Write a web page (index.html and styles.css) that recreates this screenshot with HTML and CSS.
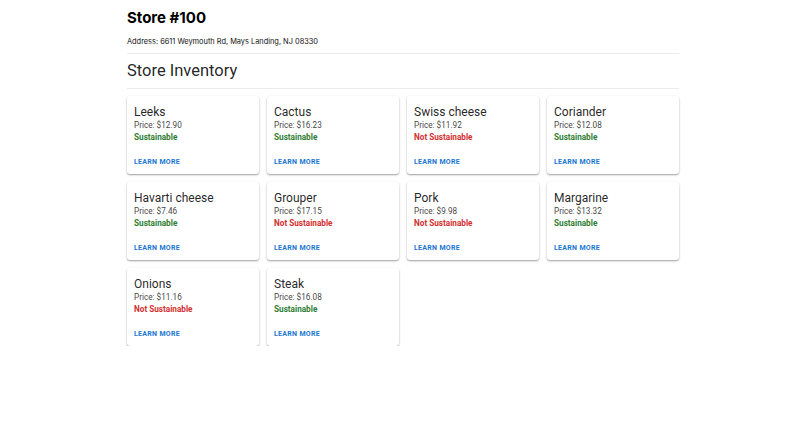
FILE: index.html
```html
<!DOCTYPE html>
<html>
<head>
<meta charset="utf-8">
<link rel="stylesheet" href="styles.css">
</head>
<body>
<div class="page">
  <h1 class="store-title">Store #100</h1>
  <p class="address">Address: 6611 Weymouth Rd, Mays Landing, NJ 08330</p>
  <hr class="divider">
  <h2 class="section-title">Store Inventory</h2>
  <hr class="divider divider-2">
  <div class="grid">
    <div class="card"><div class="name">Leeks</div><div class="price">Price: $12.90</div><div class="status ok">Sustainable</div><div class="learn">Learn More</div></div>
    <div class="card"><div class="name">Cactus</div><div class="price">Price: $16.23</div><div class="status ok">Sustainable</div><div class="learn">Learn More</div></div>
    <div class="card"><div class="name">Swiss cheese</div><div class="price">Price: $11.92</div><div class="status bad">Not Sustainable</div><div class="learn">Learn More</div></div>
    <div class="card"><div class="name">Coriander</div><div class="price">Price: $12.08</div><div class="status ok">Sustainable</div><div class="learn">Learn More</div></div>
    <div class="card"><div class="name">Havarti cheese</div><div class="price">Price: $7.46</div><div class="status ok">Sustainable</div><div class="learn">Learn More</div></div>
    <div class="card"><div class="name">Grouper</div><div class="price">Price: $17.15</div><div class="status bad">Not Sustainable</div><div class="learn">Learn More</div></div>
    <div class="card"><div class="name">Pork</div><div class="price">Price: $9.98</div><div class="status bad">Not Sustainable</div><div class="learn">Learn More</div></div>
    <div class="card"><div class="name">Margarine</div><div class="price">Price: $13.32</div><div class="status ok">Sustainable</div><div class="learn">Learn More</div></div>
    <div class="card"><div class="name">Onions</div><div class="price">Price: $11.16</div><div class="status bad">Not Sustainable</div><div class="learn">Learn More</div></div>
    <div class="card"><div class="name">Steak</div><div class="price">Price: $16.08</div><div class="status ok">Sustainable</div><div class="learn">Learn More</div></div>
  </div>
</div>
</body>
</html>
```

FILE: styles.css
```css
* { box-sizing: border-box; }
html, body { margin: 0; padding: 0; background: #fff; }
body { font-family: Roboto, "Liberation Sans", sans-serif; color: rgba(0,0,0,0.87); }
.page { width: 552px; margin: 0 auto; padding-top: 8px; }
.store-title {
  font-family: Inter, "Liberation Sans", sans-serif;
  font-weight: 700; font-size: 15px; line-height: 20px;
  margin: 0; color: #000;
}
.address {
  font-family: Inter, "Liberation Sans", sans-serif;
  font-size: 7.4px; line-height: 12px; margin: 8px 0 0; color: #111;
}
.divider { border: 0; height: 1px; background: #ececec; margin: 5px 0 0; }
.section-title {
  font-weight: 400; font-size: 16.5px; line-height: 20px;
  margin: 7px 0 0; color: rgba(0,0,0,0.87);
}
.divider-2 { margin-top: 7px; }
.grid {
  display: grid; grid-template-columns: repeat(4, 132px);
  gap: 8px; margin-top: 7px;
}
.card {
  background: #fff; border-radius: 3px;
  box-shadow: 0 1px 2px rgba(0,0,0,0.2), 0 1px 1px rgba(0,0,0,0.12), 0 1px 3px rgba(0,0,0,0.1);
  padding: 9px 7px 6px;
}
.name { font-size: 12px; line-height: 14px; }
.price { font-size: 8.2px; line-height: 12px; color: rgba(0,0,0,0.78); }
.status { font-size: 8.2px; line-height: 12px; font-weight: 700; }
.ok { color: #2e7d32; }
.bad { color: #d32f2f; }
.learn {
  margin-top: 13px; font-size: 7px; line-height: 12px; font-weight: 700;
  text-transform: uppercase; letter-spacing: 0.3px; color: #1976d2;
}
```
